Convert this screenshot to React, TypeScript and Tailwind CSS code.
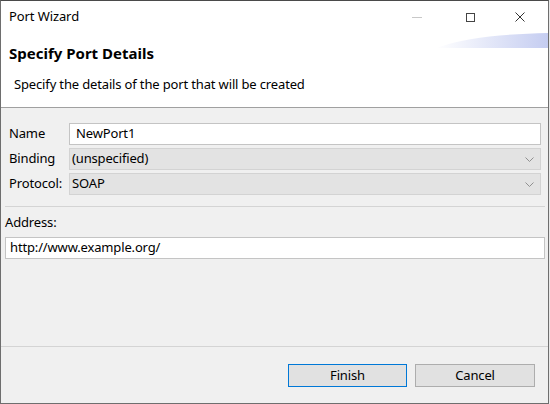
import React from "react";

const font = { fontFamily: '"Noto Sans", "Open Sans", sans-serif' };

function Chevron() {
  return (
    <svg className="ml-auto" width="9" height="5" viewBox="0 0 9 5">
      <path d="M0.5 0.5 L4.5 4.5 L8.5 0.5" stroke="#909090" fill="none" />
    </svg>
  );
}

export default function App() {
  return (
    <div className="w-[550px] h-[404px] bg-[#e8e8e8]" style={font}>
      <div className="w-[549px] h-[404px] flex flex-col border-l border-r border-b border-t border-l-[#6e6e6e] border-r-[#6e6e6e] border-b-[#6e6e6e] border-t-[#4a4a4a] bg-[#f0f0f0] text-black tracking-[-0.15px]">
        {/* title bar */}
        <div className="h-[32px] bg-white flex items-center shrink-0">
          <span className="pl-[8px] text-[13px] tracking-[-0.1px]">Port Wizard</span>
          <div className="ml-auto mr-[3px] flex items-center h-full">
            <div className="w-[50px] h-full flex items-center justify-center">
              <div className="w-[10px] h-px bg-[#c8c8c8] mr-[6px]" />
            </div>
            <div className="w-[50px] h-full flex items-center justify-center">
              <div className="w-[9px] h-[9px] border border-[#444]" />
            </div>
            <div className="w-[50px] h-full flex items-center justify-center">
              <svg width="10" height="10" viewBox="0 0 10 10">
                <path d="M0.5 0.5 L9.5 9.5 M9.5 0.5 L0.5 9.5" stroke="#333" strokeWidth="1" />
              </svg>
            </div>
          </div>
        </div>
        {/* header */}
        <div className="h-[74px] bg-white relative shrink-0 flex flex-col">
          <svg className="absolute right-0 top-0" width="112" height="16" viewBox="0 0 112 16">
            <defs>
              <linearGradient id="g" x1="0" y1="0" x2="1" y2="0">
                <stop offset="0" stopColor="#ffffff" />
                <stop offset="1" stopColor="#c5cdf1" />
              </linearGradient>
            </defs>
            <path d="M0 15 C 30 4, 70 1, 112 0 L112 15 Z" fill="url(#g)" />
          </svg>
          <div className="pl-[8px] pt-[10px] text-[15px] font-bold leading-[20px] tracking-normal">Specify Port Details</div>
          <div className="pl-[13px] pt-[12px] text-[13px] leading-[18px]">Specify the details of the port that will be created</div>
        </div>
        <div className="h-px bg-[#a0a0a0] shrink-0" />
        {/* body */}
        <div className="flex-1 flex flex-col">
          <div className="pt-[15px] pl-[8px] pr-[7px] grid grid-cols-[60px_1fr] gap-y-[3px] text-[13px] items-center">
            <span>Name</span>
            <div className="h-[22px] bg-white border border-[#c4c4c4] flex items-center pl-[6px]">NewPort1</div>
            <span>Binding</span>
            <div className="h-[22px] bg-[#e3e3e3] border border-[#d3d3d3] flex items-center pl-[2px] pr-[6px]">
              <span>(unspecified)</span>
              <Chevron />
            </div>
            <span className="whitespace-nowrap">Protocol:</span>
            <div className="h-[22px] bg-[#e3e3e3] border border-[#d3d3d3] flex items-center pl-[2px] pr-[6px]">
              <span>SOAP</span>
              <Chevron />
            </div>
          </div>
          <div className="mt-[11px] ml-[4px] mr-[3px] h-px bg-[#d4d4d4]" />
          <div className="pl-[4px] pr-[3px] pt-[5px] text-[13px]">
            <div className="leading-[20px]">Address:</div>
            <div className="mt-[5px] h-[22px] bg-white border border-[#c4c4c4] flex items-center pl-[4px]">http://www.example.org/</div>
          </div>
          <div className="mt-auto h-px bg-[#d4d4d4]" />
          <div className="h-[56px] flex items-start justify-end pt-[17px] pr-[13px] gap-[8px] text-[13px]">
            <button className="w-[119px] h-[23px] bg-[#e1e1e1] border border-[#0078d7] flex items-center justify-center">Finish</button>
            <button className="w-[120px] h-[23px] bg-[#e1e1e1] border border-[#adadad] flex items-center justify-center">Cancel</button>
          </div>
        </div>
      </div>
    </div>
  );
}
